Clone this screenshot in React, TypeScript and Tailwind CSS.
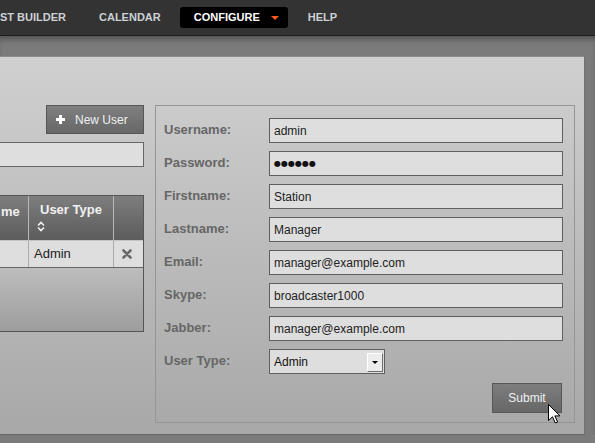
import React from 'react';

const fields = [
  { label: 'Username:', value: 'admin' },
  { label: 'Password:', value: '●●●●●●', secret: true },
  { label: 'Firstname:', value: 'Station' },
  { label: 'Lastname:', value: 'Manager' },
  { label: 'Email:', value: 'manager@example.com' },
  { label: 'Skype:', value: 'broadcaster1000' },
  { label: 'Jabber:', value: 'manager@example.com' },
];

function PlusIcon() {
  return (
    <svg width="9" height="9" viewBox="0 0 9 9" className="shrink-0">
      <path d="M3 0h3v3h3v3H6v3H3V6H0V3h3z" fill="#ffffff" />
    </svg>
  );
}

function SortIcon() {
  return (
    <svg width="8" height="11" viewBox="0 0 8 11">
      <path d="M1 4.5L4 1.5L7 4.5M1 6.5L4 9.5L7 6.5" fill="none" stroke="#f2f2f2" strokeWidth="1.6" />
    </svg>
  );
}

function RemoveIcon() {
  return (
    <svg width="10" height="10" viewBox="0 0 10 10">
      <path d="M1.5 1.5L8.5 8.5M8.5 1.5L1.5 8.5" stroke="#6a6a6a" strokeWidth="2.6" strokeLinecap="round" />
    </svg>
  );
}

function Cursor() {
  return (
    <svg width="13" height="20" viewBox="0 0 13 20" className="absolute left-[548px] top-[404px]">
      <path d="M0.5 0.5V16.5L4.5 12.8L7.3 19L9.6 18L6.9 11.9H12Z" fill="#ffffff" stroke="#000000" strokeWidth="1" strokeLinejoin="round" />
    </svg>
  );
}

export default function App() {
  return (
    <div className="relative w-[595px] h-[443px] overflow-hidden bg-[#7b7b7b] font-['Liberation_Sans',Arial,sans-serif]">
      {/* Top navigation (page scrolled: left part is out of view) */}
      <nav className="h-[36px] bg-[#333333] border-b border-[#1e1e1e] flex items-center text-[11px] font-bold text-[#cdd0d4]">
        <div className="w-[65px] whitespace-nowrap">ST BUILDER</div>
        <div className="ml-[34px]">CALENDAR</div>
        <div className="ml-[19px] h-[21px] bg-black rounded-[3px] pl-[14px] pr-[9px] flex items-center gap-[11px] text-white">
          <span>CONFIGURE</span>
          <span className="w-0 h-0 border-l-[4px] border-r-[4px] border-t-[4px] border-l-transparent border-r-transparent border-t-[#ff5a1e]" />
        </div>
        <div className="ml-[20px]">HELP</div>
      </nav>

      <main className="pt-[20px] shadow-[inset_0_6px_6px_-3px_rgba(0,0,0,0.35)]">
        <div className="w-[585px] h-[379px] bg-gradient-to-b from-[#d0d0d0] to-[#a8a8a8] border-t border-b border-r border-t-[#8c8c8c] border-b-[#666666] border-r-[#707070] flex pt-[48px]">
          {/* Users list */}
          <div className="w-[144px] shrink-0 flex flex-col">
            <div className="flex justify-end">
              <button className="w-[98px] h-[29px] border border-[#575757] bg-gradient-to-b from-[#808080] to-[#676767] flex items-center pl-[9px] gap-[10px] text-[12px] text-[#eef0f2]">
                <PlusIcon />
                <span>New User</span>
              </button>
            </div>
            <div className="mt-[8px] -ml-[50px] w-[194px] h-[25px] bg-[#dedede] border border-[#666666]" />

            <div className="mt-[28px] -ml-[40px] w-[184px] h-[137px] border border-[#555555] flex flex-col text-[13px]">
              <div className="h-[44px] flex bg-gradient-to-b from-[#7e7e7e] to-[#5c5c5c] font-bold text-[#f0f0f0]">
                <div className="w-[68px] border-r border-[#b8b8b8] pl-[40px] pt-[6px]">me</div>
                <div className="w-[85px] border-r border-[#b8b8b8] pl-[11px] pt-[6px] flex flex-col">
                  <span className="leading-[15px]">User Type</span>
                  <span className="-ml-[3px] mt-[4px] flex"><SortIcon /></span>
                </div>
                <div className="flex-1" />
              </div>
              <div className="h-[28px] flex bg-[#dedede] border-b border-[#666666] text-[#222222] border-t border-t-[#c4c4c4]">
                <div className="w-[68px] border-r border-[#ababab]" />
                <div className="w-[85px] border-r border-[#ababab] pl-[5px] flex items-center">Admin</div>
                <div className="flex-1 flex items-center pl-[8px]"><RemoveIcon /></div>
              </div>
              <div className="flex-1 bg-gradient-to-b from-[#bdbdbd] to-[#9d9d9d]" />
            </div>
          </div>

          {/* User form */}
          <div className="ml-[11px] w-[420px] h-[318px] border border-[#959595] pt-[12px] pl-[8px] flex flex-col">
            <div className="flex flex-col gap-[8px]">
              {fields.map((f) => (
                <div key={f.label} className="flex items-center h-[25px]">
                  <div className="w-[105px] -mt-[2px] text-[13px] font-bold text-[#666666]">{f.label}</div>
                  <div className="w-[294px] h-[25px] bg-[#dedede] border border-[#5f5f5f] flex items-center pl-[4px] text-[12px] text-[#222222]">
                    {f.secret ? (
                      <span className="text-[#111111] text-[8px] font-['DejaVu_Sans',sans-serif] leading-none mt-[1px]">{f.value}</span>
                    ) : (
                      f.value
                    )}
                  </div>
                </div>
              ))}
              <div className="flex items-center h-[25px]">
                <div className="w-[105px] -mt-[2px] text-[13px] font-bold text-[#666666]">User Type:</div>
                <div className="w-[116px] h-[25px] bg-[#dedede] border border-[#5f5f5f] flex items-center justify-between pl-[4px] text-[12px] text-[#111111]">
                  <span>Admin</span>
                  <span className="mr-[1px] mt-[1px] w-[16px] h-[19px] bg-[#ececec] border-t border-l border-t-white border-l-white border-b border-r border-b-[#6e6e6e] border-r-[#6e6e6e] flex items-center justify-center">
                    <span className="w-0 h-0 border-l-[3px] border-r-[3px] border-t-[3px] border-l-transparent border-r-transparent border-t-black" />
                  </span>
                </div>
              </div>
            </div>
            <div className="mt-[9px] flex justify-end pr-[12px]">
              <button className="w-[70px] h-[30px] border border-[#575757] bg-gradient-to-b from-[#7e7e7e] to-[#676767] text-[12px] text-[#eef0f2]">
                Submit
              </button>
            </div>
          </div>
        </div>
      </main>

      <Cursor />
    </div>
  );
}
